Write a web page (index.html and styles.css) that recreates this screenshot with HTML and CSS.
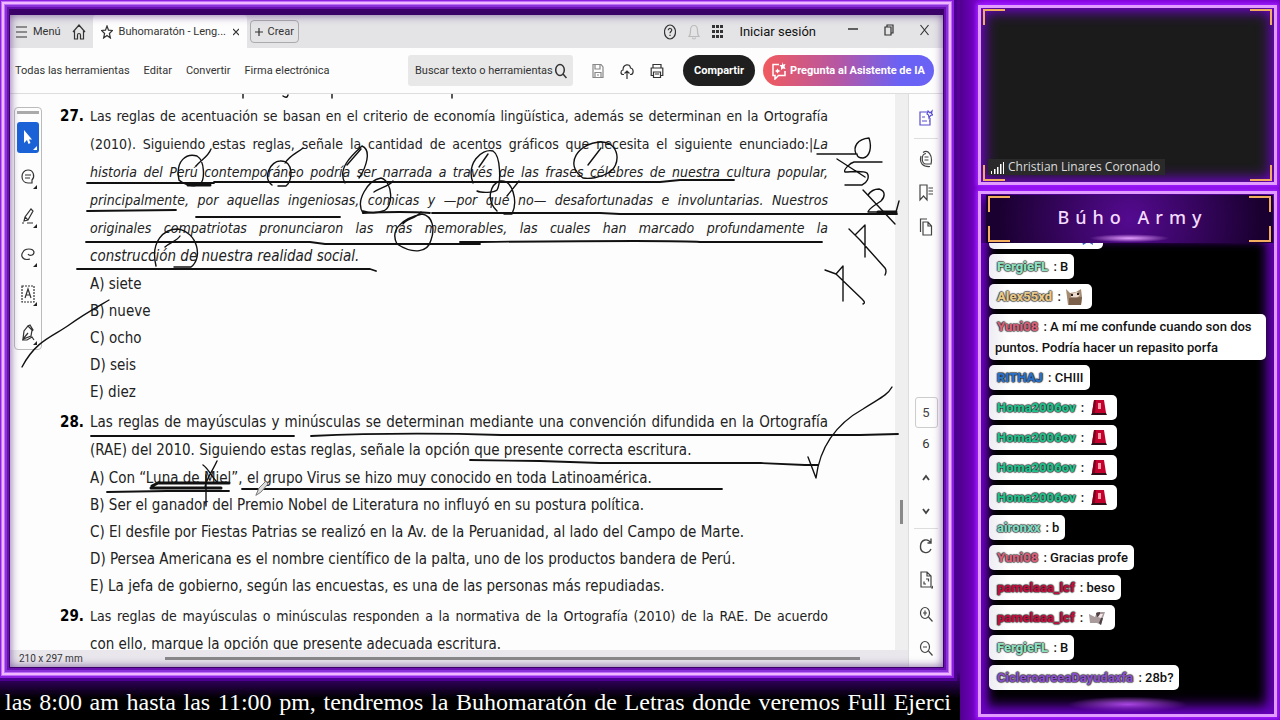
FILE: index.html
```html
<!DOCTYPE html>
<html lang="es">
<head>
  <meta charset="UTF-8">
  <meta name="viewport" content="width=device-width, initial-scale=1.0">
  <title>Buhomaratón</title>
  <link rel="stylesheet" href="styles.css">
</head>
<body>
  <main class="stage">
    <section class="frame window">
      <header class="tabs">
        <button class="menu_btn"><svg width="12" height="14" viewBox="0 0 12 14"><path d="M0 2h11M0 7h11M0 12h11"/></svg>Menú</button>
        <button class="home_btn" aria-label="Inicio"><svg width="14" height="16" viewBox="0 0 14 16"><path d="M1 8 7 1l6 7M2.500 7v8H5.500v-4a1.500 1.500 0 0 1 3 0v4h3V7"/></svg></button>
        <div class="tab">
          <svg width="12" height="14" viewBox="0 0 12 14"><path d="M6 1l1.500 4.200 4 .3-3.100 3 1 4.500L6 10.500 2.600 13l1-4.500-3.100-3 4-.3z"/></svg>
          <span>Buhomaratón - Leng...</span>
          <button class="close_tab" aria-label="Cerrar pestaña"><svg width="6" height="8" viewBox="0 0 6 8"><path d="M0 1l6 6M6 1 0 7"/></svg></button>
        </div>
        <button class="crear"><svg width="8" height="10" viewBox="0 0 8 10"><path d="M4 1v8M0 5h8"/></svg>Crear</button>
        <div class="session">
          <svg width="12" height="16" viewBox="0 0 12 16"><ellipse cx="6" cy="8" rx="5.500" ry="7"/><path d="M4.300 6.200c0-2.400 3.600-2.200 3.400 0C7.600 7.500 6 7.500 6 9.200M6 10.700v1.200"/></svg>
          <svg class="pale" width="12" height="16" viewBox="0 0 12 16"><path d="M1 12.500c1.500-1.500 1.500-3 1.500-6C2.500 3.500 4 1.500 6 1.500s3.500 2 3.500 5c0 3 0 4.500 1.500 6zM4.500 13.500c0 2 3 2 3 0"/></svg>
          <svg class="solid" width="11" height="15" viewBox="0 0 11 15"><path d="M0 1h3v3H0zM4 1h3v3H4zM8 1h3v3H8zM0 6h3v3H0zM4 6h3v3H4zM8 6h3v3H8zM0 11h3v3H0zM4 11h3v3H4zM8 11h3v3H8z"/></svg>
          <a href="#" class="login">Iniciar sesión</a>
        </div>
        <div class="win_btns">
          <button aria-label="Minimizar"><svg width="10" height="14" viewBox="0 0 10 14"><path d="M0 6h10" stroke-width="1.500"/></svg></button>
          <button aria-label="Restaurar"><svg width="10" height="14" viewBox="0 0 10 14"><path d="M1 4h6v8H1zM3 4V2h6v8H7"/></svg></button>
          <button aria-label="Cerrar"><svg width="9" height="14" viewBox="0 0 9 14"><path d="M.5 2l8 10M8.500 2l-8 10"/></svg></button>
        </div>
      </header>

      <nav class="toolbar">
        <div class="links">
          <a href="#">Todas las herramientas</a>
          <a href="#">Editar</a>
          <a href="#">Convertir</a>
          <a href="#">Firma electrónica</a>
        </div>
        <label class="search">
          <input type="text" placeholder="Buscar texto o herramientas" aria-label="Buscar">
          <svg width="12" height="16" viewBox="0 0 12 16"><ellipse cx="5" cy="7" rx="4.300" ry="5.500" stroke-width="1.500"/><path d="M8 11l3.500 4" stroke-width="1.500"/></svg>
        </label>
        <div class="file_icons">
          <svg class="mid" width="12" height="16" viewBox="0 0 12 16"><path d="M1 1.500h8l2 2.500v10.500H1zM3 1.500V6h5V1.500M3 14.500V9.500h6v5M5 12h2"/></svg>
          <svg width="14" height="16" viewBox="0 0 14 16"><path d="M4 11.500H3C.5 11.500.2 7.500 3 7c0-6 7-7 7.500-2 3.500.5 3.500 6.500 0 6.500H10M7 16V8M4.500 10.500 7 8l2.500 2.500"/></svg>
          <svg width="14" height="16" viewBox="0 0 14 16"><path d="M3 5V1.500h8V5M3 12.500H1.200V5h11.600v7.500H11M3.500 9h7v5.500h-7zM5 11h4"/></svg>
        </div>
        <button class="share">Compartir</button>
        <button class="ai"><svg width="14" height="18" viewBox="0 0 14 18"><path d="M7 2.500H1v11h2V17l3.500-3.500H13V9" stroke-width="1.500"/><path class="dot" d="M10 0l1 2.500L13.500 2l-1 2.500 1 2.500-2.500-.5L9 8l0-3L7.500 3 10 3zM5.500 6.500l1 1.500L8.500 9l-2 1-1 1.500-1-1.500-1.500-1 1.500-1z"/></svg>Pregunta al Asistente de IA</button>
      </nav>

      <div class="work">
        <div class="viewer">
          <div class="pane">
            <aside class="palette">
              <i class="grip"></i>
              <button class="tool on" aria-label="Seleccionar"><svg width="16" height="20" viewBox="0 0 16 20"><path d="M4 2v13l3-3 1.500 4 2-1L9 11.500h3z"/></svg></button>
              <button class="tool" aria-label="Comentar"><svg width="16" height="20" viewBox="0 0 16 20"><path d="M12 16H8C0 16 0 3 8 3c6 0 7 7 4 10zM5 8h6M5 11h5"/></svg></button>
              <button class="tool" aria-label="Resaltar"><svg width="16" height="20" viewBox="0 0 16 20"><path d="M11 3l2 2-5 9-4 1 1-4zM5 11l3 3M2 17h2M7 17h6"/></svg></button>
              <button class="tool" aria-label="Dibujar"><svg width="16" height="20" viewBox="0 0 16 20"><path d="M3 7c2-4 10-4 11 0 0 4-5 4-6 2M3 7c-3 4 0 9 7 7"/></svg></button>
              <button class="tool" aria-label="Texto"><svg width="16" height="20" viewBox="0 0 16 20"><path d="M2 2h12v16H2z" stroke-dasharray="2 1"/><path d="M5 14l3-9 3 9M6 11h4"/></svg></button>
              <button class="tool" aria-label="Firmar"><svg width="16" height="20" viewBox="0 0 16 20"><path d="M3 16l1-8 4-5 4 4-1 6zM3 16l5-6M2 17h5l5-3 2 3M8 3l2-1 3 5-1 1"/></svg></button>
            </aside>

            <article class="doc">
              <section class="question">
                <b class="num">27.</b>
                <div>
                  <p class="full dense">Las reglas de acentuación se basan en el criterio de economía lingüística, además se determinan en la Ortografía</p>
                  <p class="full dense">(2010). Siguiendo estas reglas, señale la cantidad de acentos gráficos que necesita el siguiente enunciado:|<em>La</em></p>
                  <p class="full dense"><em>historia del Perú contemporáneo podría ser narrada a través de las frases célebres de nuestra cultura popular,</em></p>
                  <p class="full dense"><em>principalmente, por aquellas ingeniosas, comicas y —por que no— desafortunadas e involuntarias. Nuestros</em></p>
                  <p class="full dense"><em>originales compatriotas pronunciaron las mas memorables, las cuales han marcado profundamente la</em></p>
                  <p><em>construcción de nuestra realidad social.</em></p>
                  <ul>
                    <li>A) siete</li>
                    <li>B) nueve</li>
                    <li>C) ocho</li>
                    <li>D) seis</li>
                    <li>E) diez</li>
                  </ul>
                </div>
              </section>
              <section class="question">
                <b class="num">28.</b>
                <div>
                  <p class="full">Las reglas de mayúsculas y minúsculas se determinan mediante una convención difundida en la Ortografía</p>
                  <p>(RAE) del 2010. Siguiendo estas reglas, señale la opción que presente correcta escritura.</p>
                  <ul>
                    <li>A) Con “Luna de Miel”, el grupo Virus se hizo muy conocido en toda Latinoamérica.</li>
                    <li>B) Ser el ganador del Premio Nobel de Literatura no influyó en su postura política.</li>
                    <li>C) El desfile por Fiestas Patrias se realizó en la Av. de la Peruanidad, al lado del Campo de Marte.</li>
                    <li>D) Persea Americana es el nombre científico de la palta, uno de los productos bandera de Perú.</li>
                    <li>E) La jefa de gobierno, según las encuestas, es una de las personas más repudiadas.</li>
                  </ul>
                </div>
              </section>
              <section class="question">
                <b class="num">29.</b>
                <div>
                  <p class="full dense">Las reglas de mayúsculas o minúsculas responden a la normativa de la Ortografía (2010) de la RAE. De acuerdo</p>
                  <p>con ello, marque la opción que presente adecuada escritura.</p>
                </div>
              </section>
            </article>
            <div class="vscroll"><i></i></div>

            <!-- pen strokes drawn over the page -->
            <svg class="ink" width="898" height="556" viewBox="10 94 898 556">
              <path d="M243 94v4M283 96q4 3 5-1M332 94v4M452 94v4"/>
              <path d="M87 183H214M214 182H660L680 180H734M87 211l89-1M196 217H340M363 213q40-2 67 0M432 213H600l20 1H897M86 242H310l15 2H480M460 242H480q200-2 220 0H822M77 269H370l6 2M91 436H294M311 436q90-4 190-1H860l38-1M470 460l70 1 60 2H760l45 2H818M107 492l60-1H229M242 489H722" stroke-width="1.800"/>
              <path d="M152 486l6-3h71M151 488h70M188 185h22M878 212h18" stroke-width="3"/>
              <path d="M179 180c-4-20 8-27 18-24 8 5 8 24 3 28-6 4-17 0-21-4M211 149c-3 8-9 10-15 17M272 185c-10-8-1-24 8-24 14-1 13 20 6 25h-8M303 148c-6 5-13 7-18 15M345 183c-8-14 6-27 17-37 10 4 4 22-3 32M361 149l-14 16M473 183c-7-19 8-35 20-32 8 5 8 32 4 39-3 3-16 3-20 1M488 154l-9 13M583 178c-20-14-4-35 17-36 20-1 22 24 8 31-8 5-19 6-25 5M601 148l-13 17"/>
              <path d="M363 213c-8-12 5-33 18-35 12 3 13 30 2 33-8 3-14 2-20 0M393 181c-4 5-13 7-19 11M497 211c-12-12-6-27 3-30 13-2 18 21 12 33h-8M519 181l-12 15M397 244c-8-15 7-26 25-30 11 2 13 15 9 26-3 12-17 15-34 4M421 212c-6 7-15 7-18 12M156 266c-6-25 8-37 22-37 20 4 25 29 13 38h-17M180 236c-3 5-11 7-15 11"/>
              <path d="M817 154h39c-3-7 1-15 13-16 3 9 1 19-6 20-4 0-6-1-6-4M837 159l28 18M882 162h-28c-4 1-11 8-9 10 6 0 18-2 22 1 3 4 0 10-5 12h-17"/>
              <path d="M863 190l32 34M868 195c2-3 5-6 11-6 7 2 6 8 2 12-4 3-12 7-13 11h28l3-11"/>
              <path d="M849 229l11 11 25 28c2 3 1 5 0 7M855 235l10-10v32M825 270l11 4 26 25c3 3 3 4 1 5M836 274l7-8v35"/>
              <path d="M22 367c14-27 32-31 47-42 15-11 28-18 40-25M808 457l8 21c4-32 22-55 47-69 15-10 24-13 29-22M203 465c6 4 9 13 15 18M217 461c-5 11-12 20-12 27M206 475v31"/>
              <path class="pen" d="M256 495l3-7 7-7 2 3-7 8z"/>
            </svg>
          </div>
          <footer class="status">
            <span class="size">210 x 297 mm</span>
            <i class="hscroll"></i>
          </footer>
        </div>

        <aside class="rail">
          <svg class="blue" width="14" height="18" viewBox="0 0 14 18"><path d="M8 3H1v13h10V9M3 8h3M3 12h5M10 12h1"/><path d="M9 2l2 2 2-2-.5 2.500L14 6l-2.500.5L10 9 9.500 6 8 5z"/></svg>
          <hr>
          <svg width="14" height="18" viewBox="0 0 14 18"><path d="M4 2.500C9-1 14 5 12 14H7C2 14 2 4 7 3.500M2 6c-2 7 2 11 9 10.500M5.500 7h4M5.500 10h4"/></svg>
          <svg width="14" height="18" viewBox="0 0 14 18"><path d="M1 1h7v15l-3.500-4L1 16zM9.500 4H14M9.500 7H14M9.500 10H14"/></svg>
          <svg width="14" height="18" viewBox="0 0 14 18"><path d="M4 4h5l3.500 4v9H4zM9 4v4h3.500M1.500 14V1H8"/></svg>
          <div class="pages">
            <input type="text" value="5" aria-label="Página">
            <span>6</span>
          </div>
          <svg width="14" height="18" viewBox="0 0 14 18"><path d="M4 12l3-4 3 4" stroke-width="1.800"/></svg>
          <svg width="14" height="18" viewBox="0 0 14 18"><path d="M4 7l3 4 3-4" stroke-width="1.800"/></svg>
          <hr class="tight">
          <svg width="14" height="18" viewBox="0 0 14 18"><path d="M12 12C9 18 1 16 1.500 9 2 2 9 1 12 6M12 1.500V6H8.500" stroke-width="1.400"/></svg>
          <svg width="14" height="18" viewBox="0 0 14 18"><path d="M2 1h6l4 4v11H2zM8 1v4h4M5 10.500V13h2M7 8h2.500v2.500M14 15v2h-1z"/></svg>
          <svg width="14" height="18" viewBox="0 0 14 18"><ellipse cx="6" cy="8" rx="4.500" ry="5.500"/><path d="M9.500 12l4 4.500M6 5.500v5M4 8h4"/></svg>
          <svg width="14" height="18" viewBox="0 0 14 18"><ellipse cx="6" cy="8" rx="4.500" ry="5.500"/><path d="M9.500 12l4 4.500M4 8h4"/></svg>
        </aside>
      </div>
    </section>
    <p class="ticker">las 8:00 am hasta las 11:00 pm, tendremos la Buhomaratón de Letras donde veremos Full Ejerci</p>
  </main>

  <aside class="side">
    <section class="neon cam">
      <i class="corner tl"></i><i class="corner tr"></i><i class="corner bl"></i><i class="corner br"></i>
      <p class="speaker"><svg width="14" height="13" viewBox="0 0 14 13"><path d="M1 10h1v3H1zM4 8h1.500v5H4zM7 6h1.500v7H7zM10 3h1.500v10H10zM13 1h1v12h-1z"/></svg>Christian Linares Coronado</p>
    </section>
    <section class="neon chat">
      <header class="chat_head">
        <i class="corner tl"></i><i class="corner tr"></i><i class="corner bl"></i><i class="corner br"></i>
        <h1>Búho Army</h1>
      </header>
      <div class="feed">
        <p class="msg wide"><svg class="emote" width="18" height="18" viewBox="0 0 18 18"><path fill="#3a62c0" d="M3 3h12l2 14-5-3-5 3z"/></svg></p>
        <p class="msg"><b class="mint">FergieFL</b> : B</p>
        <p class="msg"><b class="sand">Alex55xd</b> : <svg class="emote" width="18" height="18" viewBox="0 0 18 18"><path fill="#a58a72" d="M1 1l4 4 6-1 5-3 1 8-1 8H3z"/><path fill="#ead9cc" d="M6 6l6-2 3 3-3 3-6-1z"/><path fill="#7b614c" d="M4 10l13-1-1 8H4z"/><path fill="#2c2320" d="M6 6h2v2H6zM12 5h2v2h-2z"/></svg></p>
        <p class="msg"><b class="rose">Yuni08</b> : A mí me confunde cuando son dos puntos. Podría hacer un repasito porfa</p>
        <p class="msg"><b class="blue_n">RITHAJ</b> : CHIII</p>
        <p class="msg"><b class="green">Homa2006ov</b> : <svg class="emote siren" width="18" height="18" viewBox="0 0 18 18"><path fill="#c4002f" d="M4 1h10l2 13H2z"/><path fill="#7a001c" d="M4 1h2L5 14H2z"/><path fill="#301018" d="M2 14h14l1 2H1z"/><path fill="#ff9cab" d="M8 4h3v6H8z"/></svg></p>
        <p class="msg"><b class="green">Homa2006ov</b> : <svg class="emote siren" width="18" height="18" viewBox="0 0 18 18"><path fill="#c4002f" d="M4 1h10l2 13H2z"/><path fill="#7a001c" d="M4 1h2L5 14H2z"/><path fill="#301018" d="M2 14h14l1 2H1z"/><path fill="#ff9cab" d="M8 4h3v6H8z"/></svg></p>
        <p class="msg"><b class="green">Homa2006ov</b> : <svg class="emote siren" width="18" height="18" viewBox="0 0 18 18"><path fill="#c4002f" d="M4 1h10l2 13H2z"/><path fill="#7a001c" d="M4 1h2L5 14H2z"/><path fill="#301018" d="M2 14h14l1 2H1z"/><path fill="#ff9cab" d="M8 4h3v6H8z"/></svg></p>
        <p class="msg"><b class="green">Homa2006ov</b> : <svg class="emote siren" width="18" height="18" viewBox="0 0 18 18"><path fill="#c4002f" d="M4 1h10l2 13H2z"/><path fill="#7a001c" d="M4 1h2L5 14H2z"/><path fill="#301018" d="M2 14h14l1 2H1z"/><path fill="#ff9cab" d="M8 4h3v6H8z"/></svg></p>
        <p class="msg"><b class="aqua">aironxx</b> : b</p>
        <p class="msg"><b class="rose">Yuni08</b> : Gracias profe</p>
        <p class="msg"><b class="crimson">pamelaaa_lcf</b> : beso</p>
        <p class="msg"><b class="crimson">pamelaaa_lcf</b> : <svg class="emote siren" width="18" height="18" viewBox="0 0 18 18"><path fill="#a99a9c" d="M1 5l6 3 2-5 8 0-2 6-2 7-4-2-7 0z"/><path fill="#4e4043" d="M8 4l4-1 0 4-3 1zM13 9l2 0-2 7-2-2z"/><path fill="#f3e9ea" d="M12 5l3 0-2 4-3-1z"/></svg></p>
        <p class="msg"><b class="mint">FergieFL</b> : B</p>
        <p class="msg"><b class="violet">CicleroareeaDayudaxfa</b> : 28b?</p>
      </div>
    </section>
  </aside>
</body>
</html>
```
FILE: styles.css
```css
* {
  box-sizing: border-box;
}
body {
  margin: 0;
  min-height: 100vh;
  display: grid;
  grid-template-columns: 3fr 1fr;
  background: #000;
  font-family: Roboto, "Liberation Sans", sans-serif;
  font-size: 11px;
  color: #333;
}
p, ul, h1 {
  margin: 0;
  padding: 0;
}
ul {
  list-style: none;
}
button {
  font: inherit;
  color: inherit;
  border: 0;
  padding: 0;
  background: none;
}
a {
  color: inherit;
  text-decoration: none;
}
svg {
  fill: none;
  stroke: #333;
  stroke-width: 1.2;
  flex: none;
}

/* shared window */
.stage {
  display: flex;
  flex-direction: column;
  height: 100vh;
  min-width: 0;
  background: linear-gradient(#5a0098, #4b0090 93%, #000 97%);
}
.frame {
  position: relative;
  flex: 1;
  min-height: 0;
  margin: 10px 17px 13px 10px;
  display: flex;
  flex-direction: column;
  background: #fdfdfd;
  border-top: 5px solid #3a0068;
  box-shadow: 0 0 0 1px #3a0068, 0 0 0 3px #6a10b0, 0 0 0 5px #8a30d8, 0 0 0 6px #c070f8, 0 0 0 8px #f0b8ff, 0 0 0 9px #c070f8, 0 0 0 11px #8d20e0, 0 0 0 14px #4b0090;
}
.frame::after {
  content: "";
  position: absolute;
  inset: 0;
  pointer-events: none;
  box-shadow: inset 0 0 10px #7a5a9c;
}
.tabs {
  height: 33px;
  display: flex;
  align-items: center;
  background: #e4e4e6;
}
.menu_btn {
  display: flex;
  align-items: center;
  gap: 5px;
  margin-left: 6px;
}
.home_btn {
  margin: 0 7px 0 11px;
  display: flex;
}
.tab {
  align-self: stretch;
  width: 154px;
  padding: 0 8px;
  display: flex;
  align-items: center;
  gap: 6px;
  background: #fdfdfd;
  border-radius: 4px 4px 0 0;
  white-space: nowrap;
}
.close_tab {
  margin-left: auto;
  display: flex;
}
.crear {
  height: 23px;
  margin-left: 3px;
  padding: 0 4px;
  display: flex;
  align-items: center;
  gap: 5px;
  border: 1px solid #aaa;
  border-radius: 4px;
}
.session {
  margin-left: auto;
  display: flex;
  align-items: center;
  gap: 12px;
}
.pale {
  stroke: #bbb;
}
.mid {
  stroke: #888;
}
.solid {
  fill: #333;
  stroke: none;
}
.login {
  margin-left: 4px;
  font-size: 13px;
  color: #111;
}
.win_btns {
  display: flex;
  gap: 26px;
  margin: 0 14px 0 32px;
}
.toolbar {
  height: 46px;
  padding: 0 9px 0 5px;
  display: flex;
  align-items: center;
  border-bottom: 1px solid #ddd;
}
.links {
  display: flex;
  gap: 14px;
}
.search {
  height: 31px;
  width: 165px;
  margin-left: auto;
  padding: 0 6px 0 7px;
  display: flex;
  align-items: center;
  background: #e8e8e8;
  border-radius: 3px;
}
.search input {
  flex: 1;
  min-width: 0;
  padding: 0;
  border: 0;
  background: none;
  font: inherit;
}
.search input::placeholder {
  color: #333;
}
.file_icons {
  display: flex;
  align-items: center;
  gap: 16px;
  margin: 0 19px;
}
.share, .ai {
  height: 31px;
  border-radius: 16px;
  color: #fff;
  font-weight: bold;
  white-space: nowrap;
}
.share {
  width: 72px;
  background: #1f1f1f;
}
.ai {
  width: 171px;
  margin-left: 8px;
  display: flex;
  align-items: center;
  justify-content: center;
  gap: 4px;
  background: linear-gradient(90deg, #f05a5e, #b457a5 45%, #6a62f5 80%);
}
.ai svg {
  stroke: #fff;
}
.ai .dot {
  fill: #fff;
  stroke: none;
}

.work {
  flex: 1;
  min-height: 0;
  display: flex;
}
.viewer {
  flex: 1;
  min-width: 0;
  display: flex;
  flex-direction: column;
}
.pane {
  position: relative;
  flex: 1;
  min-height: 0;
  display: flex;
  overflow: hidden;
}
.palette {
  width: 28px;
  height: 243px;
  margin: 13px 0 0 4px;
  padding: 3px 2px;
  border: 1px solid #bbb;
  border-radius: 4px;
}
.grip {
  display: block;
  height: 3px;
  margin-bottom: 8px;
  background: #aaa;
}
.tool {
  position: relative;
  width: 22px;
  height: 31px;
  margin-bottom: 8px;
  display: flex;
  align-items: center;
  justify-content: center;
}
.tool::after {
  content: "";
  position: absolute;
  right: 2px;
  bottom: 3px;
  border: 2px solid;
  border-color: transparent #222 #222 transparent;
}
.on {
  background: #1a62d6;
  border-radius: 3px;
}
.on::after {
  border-color: transparent #fff #fff transparent;
}
.on svg {
  fill: #fff;
  stroke: none;
}
.doc {
  flex: 1;
  min-width: 0;
  padding: 8px 67px 0 18px;
  font-family: "DejaVu Sans Condensed", "Noto Sans", sans-serif;
  font-size: 15px;
  line-height: 28px;
  white-space: nowrap;
  color: #222;
}
.question {
  display: grid;
  grid-template-columns: 30px 1fr;
  margin-bottom: 2px;
}
.num {
  color: #000;
}
.full {
  text-align: justify;
  text-align-last: justify;
}
.dense {
  font-size: 14px;
}
.question li {
  line-height: 27px;
}
.question li:first-child {
  line-height: 28px;
}
.vscroll {
  width: 13px;
  display: flex;
  justify-content: center;
  background: #efefef;
}
.vscroll i {
  width: 3px;
  height: 24px;
  margin-top: 406px;
  background: #888;
}
.ink {
  position: absolute;
  left: 0;
  top: 0;
  stroke: #111;
  stroke-width: 1.4;
  stroke-linecap: round;
  stroke-linejoin: round;
}
.pen {
  fill: #ddd;
  stroke: #777;
  stroke-width: 1;
}
.rail {
  width: 35px;
  padding-top: 15px;
  display: flex;
  flex-direction: column;
  align-items: center;
  gap: 16px;
  border-left: 1px solid #ddd;
}
.rail svg {
  stroke: #444;
}
.rail svg.blue {
  stroke: #5a4fd0;
}
.rail hr {
  width: 24px;
  margin: -5px 0;
  border: 0;
  border-top: 1px solid #ddd;
}
.rail .tight {
  margin: -8px 0;
}
.pages {
  margin-top: 145px;
  display: flex;
  flex-direction: column;
  align-items: center;
  gap: 8px;
  font-size: 13px;
  line-height: 16px;
}
.pages input {
  width: 23px;
  height: 31px;
  padding: 0;
  border: 1px solid #ccc;
  border-radius: 3px;
  background: none;
  font: inherit;
  color: #444;
  text-align: center;
}
.status {
  height: 17px;
  display: flex;
  align-items: center;
  background: #e9e7ec;
}
.size {
  width: 155px;
  padding-left: 9px;
  font-size: 10px;
}
.hscroll {
  width: 695px;
  height: 3px;
  background: #888;
}
.ticker {
  height: 40px;
  padding: 0 9px 0 5px;
  overflow: hidden;
  white-space: nowrap;
  text-align-last: justify;
  font: 24px/44px "Liberation Serif", serif;
  color: #fff;
}

/* camera + chat */
.side {
  height: 100vh;
  padding: 5px 3px 3px 18px;
  display: flex;
  flex-direction: column;
  gap: 6px;
  background: linear-gradient(90deg, #500090, #8a00e6 8%, #7a00d0 95%);
}
.neon {
  position: relative;
  border: 3px solid #e29cff;
  background: #1b1b1b;
  box-shadow: 0 0 4px 2px #a020ff, inset 0 0 14px 3px #7a00e0;
}
.cam {
  height: 180px;
}
.corner {
  position: absolute;
  width: 22px;
  height: 16px;
  border: 0 solid #f2ae5e;
}
.tl {
  left: 2px;
  top: 1px;
  border-width: 2px 0 0 2px;
}
.tr {
  right: 2px;
  top: 1px;
  border-width: 2px 2px 0 0;
}
.bl {
  left: 2px;
  bottom: 1px;
  border-width: 0 0 2px 2px;
}
.br {
  right: 2px;
  bottom: 1px;
  border-width: 0 2px 2px 0;
}
.speaker {
  position: absolute;
  left: 7px;
  bottom: 7px;
  padding: 0 5px 0 2px;
  display: flex;
  align-items: center;
  gap: 4px;
  background: #2a2a2a;
  font: 12px/16px "Open Sans", sans-serif;
  color: #ddd;
}
.speaker svg {
  fill: #fff;
  stroke: none;
}
.chat {
  flex: 1;
  min-height: 0;
  display: flex;
  flex-direction: column;
  background: #000;
}
.chat_head {
  position: relative;
  z-index: 1;
  height: 48px;
  margin: 1px 1px 0 5px;
  display: flex;
  align-items: center;
  justify-content: center;
  background: radial-gradient(ellipse 40px 4px at 50% 90%, #e6a0ff, transparent), radial-gradient(circle at 50% 50%, #540a90, #1a0030 90%);
}
.chat_head h1 {
  padding: 0 0 4px 6px;
  font: 500 18px/26px "Noto Sans", sans-serif;
  letter-spacing: 6px;
  color: #f4dcff;
}
.feed {
  flex: 1;
  min-height: 0;
  padding: 0 8px 24px 8px;
  overflow: hidden;
  display: flex;
  flex-direction: column;
  justify-content: flex-end;
  align-items: flex-start;
  gap: 5px;
  background: radial-gradient(ellipse 60px 8px at 50% 98%, #c060f0, transparent);
  box-shadow: inset 0 -10px 18px -6px #6a00c0, inset -10px 0 14px -6px #5a00a0, inset 8px 0 8px -4px #6a00c0;
}
.msg {
  flex: none;
  min-height: 25px;
  padding: 2px 6px;
  border-radius: 5px;
  background: linear-gradient(90deg, #ececf2, #fff 20px);
  font: 500 13px/21px Roboto, sans-serif;
  color: #111;
}
.wide {
  width: 114px;
  text-align: right;
}
.msg b {
  margin: 0 2px;
  font-weight: 900;
  text-shadow: 1px 0 1px #0008, -1px 0 1px #0008, 0 1px 1px #0008, 0 -1px 1px #0008;
}
.emote {
  vertical-align: middle;
  stroke: none;
  margin: -2px 3px 0 1px;
}
.siren {
  margin-left: 2px;
}
.mint { color: #8ee0c0; }
.sand { color: #e8c88a; }
.rose { color: #d8607c; }
.blue_n { color: #2a70c8; }
.green { color: #22c08c; }
.aqua { color: #7fd8c0; }
.crimson { color: #c01040; }
.violet { color: #8a50c8; }
```
